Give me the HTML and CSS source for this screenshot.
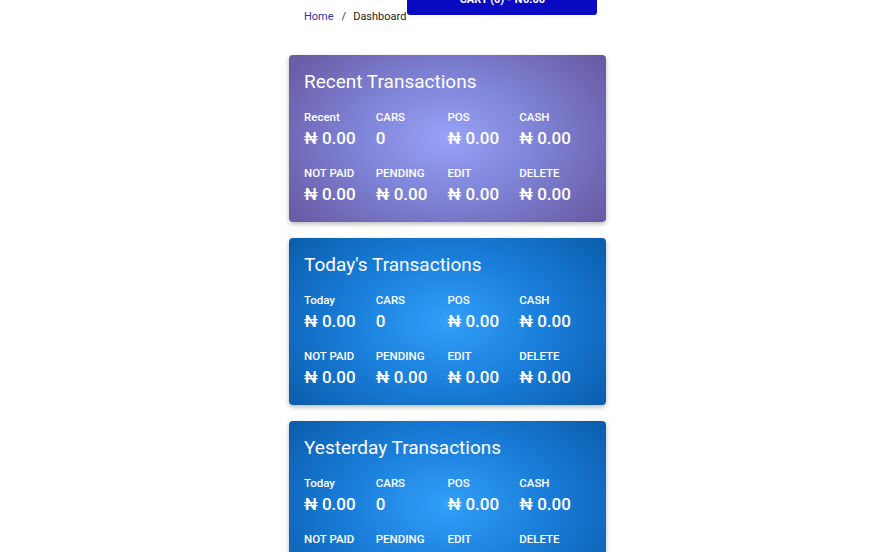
FILE: index.html
```html
<!DOCTYPE html>
<html>
<head>
<meta charset="utf-8">
<link rel="stylesheet" href="styles.css">
</head>
<body>
<div class="page">
  <div class="topbar">
    <nav class="crumbs"><a class="crumb-link" href="#">Home</a><span class="sep">/</span><span class="crumb-current">Dashboard</span></nav>
    <button class="cart">CART (0) - ₦0.00</button>
  </div>

  <section class="card purple">
    <h2 class="card-title">Recent Transactions</h2>
    <div class="stats">
      <div class="stat"><div class="label">Recent</div><div class="value">₦ 0.00</div></div>
      <div class="stat"><div class="label">CARS</div><div class="value">0</div></div>
      <div class="stat"><div class="label">POS</div><div class="value">₦ 0.00</div></div>
      <div class="stat"><div class="label">CASH</div><div class="value">₦ 0.00</div></div>
      <div class="stat"><div class="label">NOT PAID</div><div class="value">₦ 0.00</div></div>
      <div class="stat"><div class="label">PENDING</div><div class="value">₦ 0.00</div></div>
      <div class="stat"><div class="label">EDIT</div><div class="value">₦ 0.00</div></div>
      <div class="stat"><div class="label">DELETE</div><div class="value">₦ 0.00</div></div>
    </div>
  </section>

  <section class="card blue">
    <h2 class="card-title">Today's Transactions</h2>
    <div class="stats">
      <div class="stat"><div class="label">Today</div><div class="value">₦ 0.00</div></div>
      <div class="stat"><div class="label">CARS</div><div class="value">0</div></div>
      <div class="stat"><div class="label">POS</div><div class="value">₦ 0.00</div></div>
      <div class="stat"><div class="label">CASH</div><div class="value">₦ 0.00</div></div>
      <div class="stat"><div class="label">NOT PAID</div><div class="value">₦ 0.00</div></div>
      <div class="stat"><div class="label">PENDING</div><div class="value">₦ 0.00</div></div>
      <div class="stat"><div class="label">EDIT</div><div class="value">₦ 0.00</div></div>
      <div class="stat"><div class="label">DELETE</div><div class="value">₦ 0.00</div></div>
    </div>
  </section>

  <section class="card blue">
    <h2 class="card-title">Yesterday Transactions</h2>
    <div class="stats">
      <div class="stat"><div class="label">Today</div><div class="value">₦ 0.00</div></div>
      <div class="stat"><div class="label">CARS</div><div class="value">0</div></div>
      <div class="stat"><div class="label">POS</div><div class="value">₦ 0.00</div></div>
      <div class="stat"><div class="label">CASH</div><div class="value">₦ 0.00</div></div>
      <div class="stat"><div class="label">NOT PAID</div><div class="value">₦ 0.00</div></div>
      <div class="stat"><div class="label">PENDING</div><div class="value">₦ 0.00</div></div>
      <div class="stat"><div class="label">EDIT</div><div class="value">₦ 0.00</div></div>
      <div class="stat"><div class="label">DELETE</div><div class="value">₦ 0.00</div></div>
    </div>
  </section>
</div>
</body>
</html>
```
FILE: styles.css
```css
html, body {
  margin: 0;
  padding: 0;
  background: #ffffff;
  font-family: Roboto, "Noto Sans", "DejaVu Sans", sans-serif;
  overflow: hidden;
}
.page {
  width: 317px;
  margin: 0 auto;
  display: flex;
  flex-direction: column;
  gap: 16.5px;
}
.topbar {
  display: flex;
  align-items: flex-start;
  height: 38.5px;
}
.crumbs {
  padding-left: 15px;
  padding-top: 9px;
  font-size: 11px;
  line-height: 15px;
  color: #222;
  white-space: nowrap;
}
.crumb-link {
  color: #3232a8;
  text-decoration: none;
}
.sep {
  margin: 0 7px 0 8px;
  color: #333;
}
.cart {
  margin-top: -15px;
  margin-left: 1px;
  width: 190px;
  height: 30px;
  border: none;
  border-radius: 3px;
  background: #0a0ac2;
  color: #fff;
  font-family: Roboto, sans-serif;
  font-weight: 700;
  font-size: 11px;
  padding: 0;
  line-height: 30px;
}
.card {
  border-radius: 4px;
  padding: 15px 15px 14.5px;
  color: #fff;
  box-shadow: 0 2px 5px rgba(0,0,0,0.28);
}
.purple {
  background: radial-gradient(ellipse 75% 95% at 50% 50%, #98a2f6 0%, #8086da 35%, #6a5ca6 80%, #63519a 100%);
}
.blue {
  background: radial-gradient(ellipse 75% 95% at 50% 50%, #32a0fa 0%, #1a7fdb 40%, #0b5cac 85%, #0853a0 100%);
}
.card-title {
  margin: 0 0 15px 0;
  font-size: 19px;
  line-height: 24px;
  font-weight: 400;
}
.stats {
  display: grid;
  grid-template-columns: repeat(4, 1fr);
  row-gap: 14px;
}
.label {
  font-size: 11.5px;
  line-height: 16px;
  font-weight: 500;
}
.value {
  margin-top: 1px;
  font-size: 17px;
  line-height: 25px;
  font-weight: 500;
  white-space: nowrap;
}
```
